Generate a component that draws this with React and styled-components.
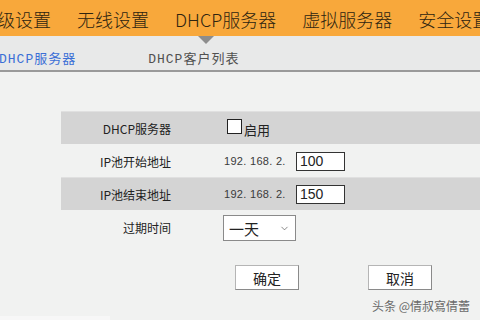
import React from 'react';
import styled, {createGlobalStyle} from 'styled-components';
import {ChevronDown} from 'lucide-react';

const GlobalStyle = createGlobalStyle`
    html, body {
        margin: 0;
        padding: 0;
        background: #f1f2f1;
    }
    body {
        font-family: "Noto Sans CJK SC", "Liberation Sans", sans-serif;
    }
`;

const Page = styled.div`
    position: relative;
    width: 480px;
    height: 320px;
    overflow: hidden;
    background: #f1f2f1;
`;

const TopBar = styled.nav`
    height: 36px;
    background: #f8a83b;
    display: flex;
    align-items: center;
    gap: 26px;
    margin-left: -3px;
    padding-top: 1px;
    box-sizing: border-box;
    white-space: nowrap;
    overflow: hidden;
`;

const TopItem = styled.span`
    font-family: "Noto Sans CJK SC", sans-serif;
    font-weight: 300;
    font-size: 18px;
    color: #2e2410;
    flex-shrink: 0;
`;

const SubBar = styled.div`
    position: relative;
    height: 36px;
    background: #e8e9e9;
    border-bottom: 2px solid #9a9a9a;
    display: flex;
    align-items: flex-end;
    padding-bottom: 3px;
    box-sizing: border-box;
    white-space: nowrap;
`;

const SubTab = styled.span`
    font-family: "Liberation Mono", "Noto Sans CJK SC", monospace;
    font-size: 13px;
    letter-spacing: 1px;
    color: ${p => (p.$active ? '#3b6fd6' : '#505050')};
    margin-left: ${p => p.$offset}px;
`;

const Pointer = styled.span`
    position: absolute;
    left: 198px;
    top: 0;
    width: 0;
    height: 0;
    border-left: 8px solid transparent;
    border-right: 8px solid transparent;
    border-top: 8px solid #8d8d8d;
`;

const Form = styled.div`
    margin: 39px 0 0 61px;
`;

const Row = styled.div`
    display: grid;
    grid-template-columns: 110px 1fr;
    column-gap: 52px;
    align-items: center;
    height: 33px;
    background: ${p => (p.$shade ? '#d4d4d4' : 'transparent')};
    border-top: 1px solid ${p => (p.$shade ? '#e0e0e0' : 'transparent')};
    box-sizing: border-box;
`;

const Label = styled.span`
    text-align: right;
    font-size: 12px;
    color: #222;
`;

const Value = styled.div`
    display: flex;
    align-items: center;
`;

const CheckBox = styled.span`
    width: 13px;
    height: 13px;
    border: 1px solid #222;
    background: #fff;
    margin-left: 4px;
    margin-top: -4px;
`;

const CheckText = styled.span`
    font-size: 13px;
    color: #222;
    margin-left: 2px;
    margin-top: 2px;
`;

const IpPrefix = styled.span`
    font-family: "Liberation Sans", sans-serif;
    font-size: 11px;
    letter-spacing: 0.3px;
    color: #3a3a3a;
    margin-left: 1px;
    width: 72px;
`;

const TextBox = styled.input`
    width: 49px;
    height: 19px;
    box-sizing: border-box;
    border: 1px solid #333;
    background: #fff;
    font-family: "Liberation Sans", sans-serif;
    font-size: 14px;
    color: #222;
    padding: 0 3px;
    outline: none;
`;

const SelectWrap = styled.div`
    position: relative;
    width: 73px;
    height: 26px;
    margin-top: 2px;

    svg {
        position: absolute;
        right: 6px;
        top: 8px;
        pointer-events: none;
    }
`;

const Select = styled.select`
    appearance: none;
    width: 100%;
    height: 100%;
    border: 1px solid #8a8a8a;
    background: #fff;
    font-family: "Noto Sans CJK SC", sans-serif;
    font-size: 15px;
    color: #222;
    padding: 0 5px;
    outline: none;
`;

const Buttons = styled.div`
    display: flex;
    gap: 69px;
    padding-left: 235px;
    margin-top: 22px;
`;

const Button = styled.button`
    width: 64px;
    height: 25px;
    background: #fff;
    border: 1px solid #b5b5b5;
    border-right-color: #8a8a8a;
    border-bottom-color: #8a8a8a;
    font-family: "Noto Sans CJK SC", sans-serif;
    font-size: 14px;
    color: #222;
    padding: 0;
`;

const Watermark = styled.span`
    position: absolute;
    left: 372px;
    top: 297px;
    font-size: 12px;
    color: #6a6a6a;
    white-space: nowrap;
`;

const Footer = styled.div`
    position: absolute;
    left: 0;
    bottom: 0;
    width: 110px;
    height: 4px;
    background: #f7f7f7;
`;

const menu = ['级设置', '无线设置', 'DHCP服务器', '虚拟服务器', '安全设置'];

export default function App() {
    return (
        <Page>
            <GlobalStyle/>
            <TopBar>
                {menu.map(m => <TopItem key={m}>{m}</TopItem>)}
            </TopBar>
            <SubBar>
                <Pointer/>
                <SubTab $active $offset={-1}>DHCP服务器</SubTab>
                <SubTab $offset={72}>DHCP客户列表</SubTab>
            </SubBar>
            <Form>
                <Row $shade>
                    <Label>DHCP服务器</Label>
                    <Value>
                        <CheckBox/>
                        <CheckText>启用</CheckText>
                    </Value>
                </Row>
                <Row>
                    <Label>IP池开始地址</Label>
                    <Value>
                        <IpPrefix>192. 168. 2.</IpPrefix>
                        <TextBox defaultValue="100"/>
                    </Value>
                </Row>
                <Row $shade>
                    <Label>IP池结束地址</Label>
                    <Value>
                        <IpPrefix>192. 168. 2.</IpPrefix>
                        <TextBox defaultValue="150"/>
                    </Value>
                </Row>
                <Row>
                    <Label>过期时间</Label>
                    <Value>
                        <SelectWrap>
                            <Select defaultValue="1">
                                <option value="1">一天</option>
                                <option value="7">一周</option>
                            </Select>
                            <ChevronDown size={11} color="#555" strokeWidth={1.5}/>
                        </SelectWrap>
                    </Value>
                </Row>
            </Form>
            <Buttons>
                <Button>确定</Button>
                <Button>取消</Button>
            </Buttons>
            <Watermark>头条 @倩叔寫倩蕾</Watermark>
            <Footer/>
        </Page>
    );
}
